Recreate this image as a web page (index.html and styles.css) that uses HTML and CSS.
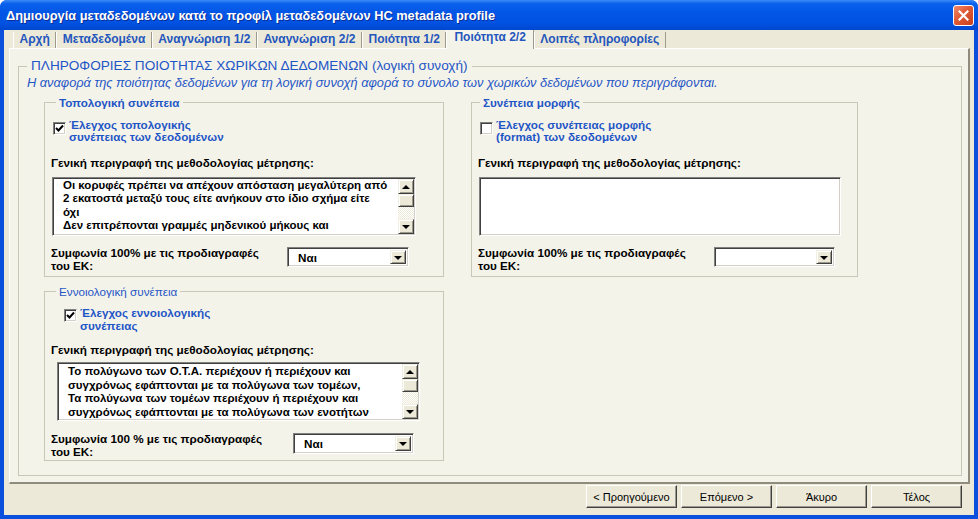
FILE: index.html
```html
<!DOCTYPE html>
<html lang="el">
<head>
    <meta charset="UTF-8">
    <title>Δημιουργία μεταδεδομένων</title>
    <link rel="stylesheet" href="styles.css">
</head>
<body>
<div class="window">
    <!-- Title bar -->
    <div class="titlebar">
        <span class="title">Δημιουργία μεταδεδομένων κατά το προφίλ μεταδεδομένων HC metadata profile</span>
        <span class="close-btn">
            <svg width="11" height="11" viewBox="0 0 11 11"><path d="M1.5 1.5l8 8M9.5 1.5l-8 8" stroke="#fff" stroke-width="2.2" stroke-linecap="square"/></svg>
        </span>
    </div>

    <div class="client">
        <!-- Tabs -->
        <div class="tabs">
            <span class="tab">Αρχή</span>
            <span class="tab">Μεταδεδομένα</span>
            <span class="tab">Αναγνώριση 1/2</span>
            <span class="tab">Αναγνώριση 2/2</span>
            <span class="tab">Ποιότητα 1/2</span>
            <span class="tab active">Ποιότητα 2/2</span>
            <span class="tab">Λοιπές πληροφορίες</span>
        </div>

        <div class="panel">
            <fieldset class="group main-group">
                <legend>ΠΛΗΡΟΦΟΡΙΕΣ ΠΟΙΟΤΗΤΑΣ ΧΩΡΙΚΩΝ ΔΕΔΟΜΕΝΩΝ (λογική συνοχή)</legend>
                <p class="note">Η αναφορά της ποιότητας δεδομένων για τη λογική συνοχή αφορά το σύνολο των χωρικών δεδομένων που περιγράφονται.</p>

                <div class="columns">
                    <div class="col left-col">
                        <!-- Topology -->
                        <fieldset class="group sub topo">
                            <legend class="bold">Τοπολογική συνέπεια</legend>
                            <div class="check-row">
                                <span class="checkbox checked"><svg width="9" height="9" viewBox="0 0 9 9"><path d="M1 4l2.5 2.5L8 1.5" fill="none" stroke="#000" stroke-width="2"/></svg></span>
                                <span class="check-label">Έλεγχος τοπολογικής<br>συνέπειας των δεοδομένων</span>
                            </div>
                            <div class="field-label">Γενική περιγραφή της μεθοδολογίας μέτρησης:</div>
                            <div class="textbox topo-text">
                                <div class="text-lines">Οι κορυφές πρέπει να απέχουν απόσταση μεγαλύτερη από<br>2 εκατοστά μεταξύ τους είτε ανήκουν στο ίδιο σχήμα είτε<br>όχι<br>Δεν επιτρέπονται γραμμές μηδενικού μήκους και</div>
                                <div class="scrollbar">
                                    <span class="sb-btn up"></span>
                                    <span class="sb-thumb"></span>
                                    <span class="sb-track"></span>
                                    <span class="sb-btn down"></span>
                                </div>
                            </div>
                            <div class="agree-row">
                                <span class="agree-label">Συμφωνία 100% με τις προδιαγραφές<br>του ΕΚ:</span>
                                <span class="combo topo-combo"><span class="combo-value">Ναι</span><span class="combo-btn"></span></span>
                            </div>
                        </fieldset>

                        <!-- Concept -->
                        <fieldset class="group sub concept">
                            <legend>Εννοιολογική συνέπεια</legend>
                            <div class="check-row">
                                <span class="checkbox checked"><svg width="9" height="9" viewBox="0 0 9 9"><path d="M1 4l2.5 2.5L8 1.5" fill="none" stroke="#000" stroke-width="2"/></svg></span>
                                <span class="check-label">Έλεγχος εννοιολογικής<br>συνέπειας</span>
                            </div>
                            <div class="field-label">Γενική περιγραφή της μεθοδολογίας μέτρησης:</div>
                            <div class="textbox concept-text">
                                <div class="text-lines">Το πολύγωνο των Ο.Τ.Α. περιέχουν ή περιέχουν και<br>συγχρόνως εφάπτονται με τα πολύγωνα των τομέων,<br>Τα πολύγωνα των τομέων περιέχουν ή περιέχουν και<br>συγχρόνως εφάπτονται με τα πολύγωνα των ενοτήτων</div>
                                <div class="scrollbar">
                                    <span class="sb-btn up"></span>
                                    <span class="sb-thumb"></span>
                                    <span class="sb-track"></span>
                                    <span class="sb-btn down"></span>
                                </div>
                            </div>
                            <div class="agree-row">
                                <span class="agree-label">Συμφωνία 100 % με τις προδιαγραφές<br>του ΕΚ:</span>
                                <span class="combo concept-combo"><span class="combo-value">Ναι</span><span class="combo-btn"></span></span>
                            </div>
                        </fieldset>
                    </div>

                    <div class="col right-col">
                        <!-- Format -->
                        <fieldset class="group sub format">
                            <legend class="bold">Συνέπεια μορφής</legend>
                            <div class="check-row">
                                <span class="checkbox"></span>
                                <span class="check-label">Έλεγχος συνέπειας μορφής<br>(format) των δεοδομένων</span>
                            </div>
                            <div class="field-label">Γενική περιγραφή της μεθοδολογίας μέτρησης:</div>
                            <div class="textbox format-text"></div>
                            <div class="agree-row">
                                <span class="agree-label">Συμφωνία 100% με τις προδιαγραφές<br>του ΕΚ:</span>
                                <span class="combo format-combo"><span class="combo-value"></span><span class="combo-btn"></span></span>
                            </div>
                        </fieldset>
                    </div>
                </div>
            </fieldset>
        </div>

        <!-- Wizard buttons -->
        <div class="buttons">
            <button class="btn">&lt; Προηγούμενο</button>
            <button class="btn">Επόμενο &gt;</button>
            <button class="btn">Άκυρο</button>
            <button class="btn">Τέλος</button>
        </div>
    </div>
</div>
</body>
</html>
```

FILE: styles.css
```css
* {
    box-sizing: border-box;
}

body {
    margin: 0;
    font-family: "Liberation Sans", Arial, sans-serif;
    font-size: 11.7px;
    background: #fff;
}

/* Window frame */
.window {
    width: 978px;
    height: 519px;
    display: flex;
    flex-direction: column;
    background: #0b50dd;
    border-radius: 7px 7px 0 0;
    overflow: hidden;
}

.titlebar {
    height: 30px;
    flex: none;
    display: flex;
    align-items: center;
    justify-content: space-between;
    padding: 0 4px 0 6px;
    background: linear-gradient(#3d8cf7 0%, #0a62ec 12%, #0356e6 40%, #0052e2 75%, #0047d0 100%);
}

.title {
    color: #fff;
    font-weight: bold;
    font-size: 12.8px;
    text-shadow: 1px 1px #0b2d94;
}

.close-btn {
    width: 21px;
    height: 21px;
    display: flex;
    align-items: center;
    justify-content: center;
    border: 1px solid #fff;
    border-radius: 3px;
    background: linear-gradient(135deg, #f08a6c 0%, #e05a36 45%, #c8401c 100%);
}

.client {
    flex: 1;
    margin: 0 4px 4px;
    background: #ece9d8;
    display: flex;
    flex-direction: column;
}

/* Tabs */
.tabs {
    height: 18px;
    flex: none;
    display: flex;
    align-items: flex-end;
    padding-left: 9px;
}

.tab {
    height: 16px;
    line-height: 15px;
    padding: 0 5.5px;
    font-size: 12px;
    color: #2456bd;
    font-weight: bold;
    border-left: 1px solid #fff;
    border-right: 1px solid #9d9a8c;
    white-space: nowrap;
}

.tab.active {
    height: 19px;
    line-height: 15px;
    margin-bottom: -1px;
    padding: 0 7px;
    background: #f4f3ea;
    position: relative;
    z-index: 1;
}

.panel {
    height: 436px;
    flex: none;
    margin: 0 4px 0 5px;
    padding: 9px 6px 6px 8px;
    background: #f4f3ea;
    border-top: 1px solid #fff;
    border-left: 1px solid #fff;
    border-right: 2px solid #8f8c7e;
    border-bottom: 2px solid #8f8c7e;
    display: flex;
    flex-direction: column;
}

/* Group boxes */
.group {
    margin: 0;
    min-width: 0;
    border: 1px solid #c9c7b8;
}

.group legend {
    color: #1f56c6;
    padding: 0 3px;
}

.main-group {
    flex: 1;
    padding: 2px 8px 0 8px;
}

.main-group > legend {
    font-size: 13.6px;
    line-height: 16px;
    padding: 0 4px;
}

.note {
    margin: 0;
    font-style: italic;
    font-size: 12.8px;
    line-height: 14px;
    color: #1f56c6;
}

.columns {
    display: flex;
    gap: 27px;
    margin-top: 6px;
    padding-left: 17px;
}

.left-col {
    width: 400px;
}

.right-col {
    width: 387px;
}

.sub {
    padding: 0 6px 4px 6px;
}

.sub legend {
    line-height: 13px;
    margin-left: 5px;
}

.sub legend.bold {
    font-weight: bold;
}

.format legend {
    margin-left: 2px;
}

.concept {
    margin-top: 8px;
    padding-bottom: 2px;
}

.check-row {
    display: flex;
    gap: 3px;
    margin-top: 10px;
    padding-left: 2px;
}

.concept .check-row {
    margin-top: 8px;
    padding-left: 13px;
}

.checkbox {
    width: 13px;
    height: 13px;
    flex: none;
    margin-top: 3px;
    background: #fff;
    border: 1px solid;
    border-color: #808080 #fff #fff #808080;
    box-shadow: inset 1px 1px #404040, inset -1px -1px #d4d0c8;
    display: flex;
    align-items: center;
    justify-content: center;
}

.check-label {
    color: #1f56c6;
    font-weight: bold;
    line-height: 12px;
}

.concept .check-label {
    line-height: 13px;
}

.field-label {
    font-weight: bold;
    line-height: 13px;
    margin-top: 13px;
}

.concept .field-label {
    margin-top: 11px;
}

/* Sunken text boxes */
.textbox {
    height: 59px;
    margin-top: 8px;
    background: #fff;
    border: 1px solid;
    border-color: #808080 #fff #fff #808080;
    box-shadow: inset 1px 1px #404040, inset -1px -1px #d4d0c8;
    display: flex;
    padding: 1px;
}

.topo-text {
    width: 364px;
    margin-left: 1px;
}

.concept-text {
    width: 363px;
    margin-left: 6px;
    margin-top: 6px;
}

.format-text {
    width: 362px;
    margin-left: 1px;
}

.text-lines {
    flex: 1;
    overflow: hidden;
    white-space: nowrap;
    font-weight: bold;
    font-size: 11.5px;
    padding-left: 9px;
    line-height: 13.4px;
}

.concept-text .text-lines {
    line-height: 13.5px;
    padding-top: 1px;
}

.scrollbar {
    width: 16px;
    flex: none;
    display: flex;
    flex-direction: column;
}

.sb-btn,
.sb-thumb,
.combo-btn {
    background: #ece9d8;
    border: 1px solid;
    border-color: #f1efe2 #404040 #404040 #f1efe2;
    box-shadow: inset 1px 1px #fff, inset -1px -1px #9d9a8c;
    display: flex;
    align-items: center;
    justify-content: center;
}

.sb-btn {
    height: 15px;
}

.sb-thumb {
    height: 13px;
}

.sb-track {
    flex: 1;
    background: repeating-conic-gradient(#ece9d8 0 25%, #fff 0 50%) 0 0 / 2px 2px;
}

.sb-btn::after,
.combo-btn::after {
    content: "";
    border: 4px solid transparent;
}

.sb-btn.up::after {
    border-top-width: 0;
    border-bottom-color: #000;
}

.sb-btn.down::after,
.combo-btn::after {
    border-bottom-width: 0;
    border-top-color: #000;
    margin-top: 1px;
}

/* Agreement row with combo */
.agree-row {
    display: flex;
    margin-top: 10px;
}

.concept .agree-row {
    margin-top: 11px;
}

.agree-label {
    width: 236px;
    flex: none;
    font-weight: bold;
    line-height: 13px;
}

.concept .agree-label {
    width: 242px;
}

.combo {
    height: 20px;
    margin-top: 1px;
    background: #fff;
    border: 1px solid;
    border-color: #808080 #fff #fff #808080;
    box-shadow: inset 1px 1px #404040, inset -1px -1px #d4d0c8;
    display: flex;
    padding: 2px;
}

.topo-combo {
    width: 122px;
}

.concept-combo {
    width: 121px;
    height: 21px;
}

.format-combo {
    width: 121px;
}

.combo-value {
    flex: 1;
    font-weight: bold;
    padding-left: 8px;
    line-height: 15px;
}

.combo-btn {
    width: 16px;
}

/* Wizard buttons */
.buttons {
    display: flex;
    justify-content: flex-end;
    gap: 4px;
    margin-top: 1px;
    padding-right: 12px;
}

.btn {
    width: 91px;
    height: 23px;
    padding: 0;
    font-family: "Liberation Sans", Arial, sans-serif;
    font-size: 11px;
    color: #000;
    background: #ece9d8;
    border: 1px solid;
    border-color: #fff #404040 #404040 #fff;
    box-shadow: inset -1px -1px #9d9a8c;
}
```
